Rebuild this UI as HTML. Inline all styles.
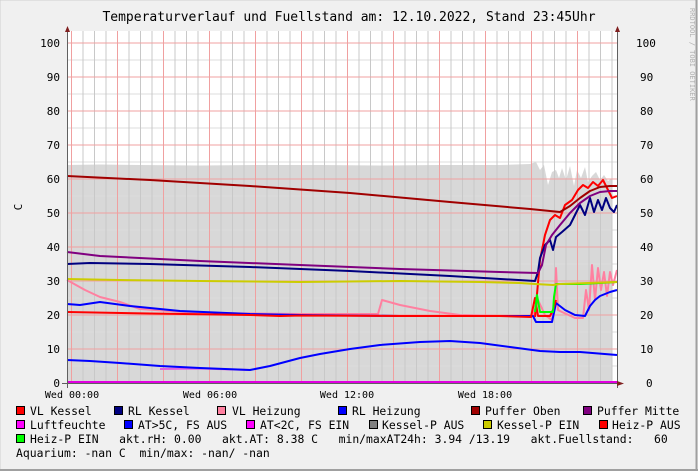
<!DOCTYPE html>
<html><head><meta charset="utf-8"><style>
html,body{margin:0;padding:0;background:#f0f0f0;}
svg{display:block;}
text{font-family:"DejaVu Sans Mono","Liberation Mono",monospace;fill:#000;}
</style></head><body>
<svg width="698" height="471" viewBox="0 0 698 471" xmlns="http://www.w3.org/2000/svg">
<rect x="0" y="0" width="698" height="471" fill="#f0f0f0"/>
<rect x="0" y="0" width="697" height="470" fill="none" stroke="#cfcfcf" stroke-width="1"/>
<line x1="696.5" y1="0" x2="696.5" y2="471" stroke="#a0a0a0" stroke-width="2"/>
<line x1="0" y1="470" x2="698" y2="470" stroke="#a0a0a0" stroke-width="2"/>
<text x="349" y="21" font-size="13" text-anchor="middle">Temperaturverlauf und Fuellstand am: 12.10.2022, Stand 23:45Uhr</text>
<text x="690" y="8" font-size="7" style="fill:#b0b0b0" transform="rotate(90 690 8)">RRDTOOL / TOBI OETIKER</text>
<rect x="67" y="31" width="550" height="352" fill="#fff"/>
<path d="M67,383 L67,165 L100,164.5 L140,165 L200,165.5 L260,165 L320,165 L380,165.5 L440,165 L500,165 L530,164 L536,162 L540,170 L544,165 L548,185 L552,172 L556,170 L559,178 L562,168 L566,180 L570,166 L574,186 L577,170 L581,178 L585,167 L588,182 L592,176 L596,172 L600,180 L604,175 L608,181 L612,178 L612,383 Z" fill="#d8d8d8"/>
<g stroke="#dcdcdc" stroke-width="1">
<line x1="67" y1="366" x2="617" y2="366"/><line x1="67" y1="332" x2="617" y2="332"/><line x1="67" y1="298" x2="617" y2="298"/><line x1="67" y1="264" x2="617" y2="264"/><line x1="67" y1="230" x2="617" y2="230"/><line x1="67" y1="196" x2="617" y2="196"/><line x1="67" y1="162" x2="617" y2="162"/><line x1="67" y1="128" x2="617" y2="128"/><line x1="67" y1="94" x2="617" y2="94"/><line x1="67" y1="60" x2="617" y2="60"/>
</g>
<g stroke="#c8c8c8" stroke-width="1" id="vm"></g>
<g id="grid"></g>
<g fill="none" stroke-width="2" stroke-linejoin="round">
<path stroke="#e060e0" d="M160,369 L200,368.5 L250,370"/>
<path stroke="#ff80a0" d="M67,280 L85,290 L100,297 L120,302 L140,309 L200,313 L300,314 L378,314 L382,300 L400,305 L430,311 L460,315 L500,316 L533,316 L538,300 L545,315 L552,320 L555,300 L556,268 L558,310 L562,312 L575,318 L583,318 L586,290 L589,310 L592,265 L595,300 L598,268 L601,290 L604,272 L607,296 L610,272 L613,285 L617,270"/>
<path stroke="#0000ff" d="M67,304 L80,305 L100,302 L130,306 L180,311 L250,314 L300,315 L400,316 L500,316 L533,316 L536,322 L552,322 L556,303 L565,310 L575,315 L585,316 L590,306 L595,300 L600,296 L605,294 L610,292 L617,290"/>
<path stroke="#ff0000" d="M67,312 L150,313.5 L250,315 L280,316 L300,315.5 L400,316 L500,316 L531,317 L535,298 L538,316 L550,316 L553,310 L556,300"/>
<path stroke="#ff0000" d="M535,317 L540,260 L545,235 L550,220 L555,215 L560,218 L565,205 L572,200 L578,190 L583,185 L588,188 L593,182 L598,186 L603,180 L607,188 L612,198 L617,196"/>
<path stroke="#00ff00" d="M535,312 L537,295 L540,312 L553,312 L554,297 L556,284 L580,284 L600,283 L617,282"/>
<path stroke="#cccc00" d="M67,279 L120,280 L200,281 L300,282 L400,281 L480,282 L520,283 L535,284 L553,285 L560,284 L617,282"/>
<path stroke="#000080" d="M67,264 L90,263 L150,264 L250,267 L350,271 L450,276 L535,281 L538,272 L540,258 L545,245 L550,240 L553,250 L556,237 L562,232 L570,225 L575,215 L580,205 L585,215 L590,198 L594,212 L598,200 L602,210 L606,198 L610,208 L614,212 L617,205"/>
<path stroke="#800080" d="M67,252 L100,256 L200,261 L300,265 L400,269 L500,272 L538,273 L542,265 L546,245 L552,235 L560,225 L570,213 L580,203 L590,196 L600,192 L610,191 L617,191"/>
<path stroke="#a00000" d="M67,176 L150,180 L250,186 L350,193 L450,202 L530,209 L560,212 L570,206 L580,198 L590,191 L600,187 L610,186 L617,186"/>
<path stroke="#0000ff" d="M67,360 L90,361 L120,363 L160,366 L200,368 L250,370 L270,366 L300,358 L320,354 L350,349 L380,345 L420,342 L450,341 L480,343 L510,347 L540,351 L560,352 L580,352 L617,355"/>
<path stroke="#e000e0" d="M67,382 L617,382"/>
</g>
<line x1="67.5" y1="27" x2="67.5" y2="388" stroke="#606060"/>
<line x1="617.5" y1="27" x2="617.5" y2="388" stroke="#606060"/>
<line x1="62" y1="383.5" x2="622" y2="383.5" stroke="#606060"/>
<path d="M65,32 L67.5,26 L70,32 Z M615,32 L617.5,26 L620,32 Z M617,381 L624,383.5 L617,386 Z" fill="#802020"/>
<g font-size="11">
<text x="60" y="47" text-anchor="end">100</text><text x="60" y="81" text-anchor="end">90</text><text x="60" y="115" text-anchor="end">80</text><text x="60" y="149" text-anchor="end">70</text><text x="60" y="183" text-anchor="end">60</text><text x="60" y="217" text-anchor="end">50</text><text x="60" y="251" text-anchor="end">40</text><text x="60" y="285" text-anchor="end">30</text><text x="60" y="319" text-anchor="end">20</text><text x="60" y="353" text-anchor="end">10</text><text x="60" y="387" text-anchor="end">0</text>
<text x="636" y="47">100</text><text x="640" y="81">90</text><text x="640" y="115">80</text><text x="640" y="149">70</text><text x="640" y="183">60</text><text x="640" y="217">50</text><text x="640" y="251">40</text><text x="640" y="285">30</text><text x="640" y="319">20</text><text x="640" y="353">10</text><text x="646" y="387">0</text>
<text x="18" y="211" transform="rotate(-90 18 207)" text-anchor="middle">C</text>
</g>
<g font-size="10">
<text x="72" y="398" text-anchor="middle">Wed 00:00</text><text x="210" y="398" text-anchor="middle">Wed 06:00</text><text x="347" y="398" text-anchor="middle">Wed 12:00</text><text x="485" y="398" text-anchor="middle">Wed 18:00</text>
</g>
<g stroke="#000" stroke-width="1">
<rect x="16.5" y="406.5" width="8" height="8" fill="#ff0000"/><rect x="114.5" y="406.5" width="8" height="8" fill="#000080"/><rect x="217.5" y="406.5" width="8" height="8" fill="#ff80a0"/><rect x="338.5" y="406.5" width="8" height="8" fill="#0000ff"/><rect x="471.5" y="406.5" width="8" height="8" fill="#a00000"/><rect x="583.5" y="406.5" width="8" height="8" fill="#800080"/>
<rect x="16.5" y="420.5" width="8" height="8" fill="#ff00ff"/><rect x="124.5" y="420.5" width="8" height="8" fill="#0000ff"/><rect x="246.5" y="420.5" width="8" height="8" fill="#ff00ff"/><rect x="369.5" y="420.5" width="8" height="8" fill="#808080"/><rect x="483.5" y="420.5" width="8" height="8" fill="#cccc00"/><rect x="599.5" y="420.5" width="8" height="8" fill="#ff0000"/>
<rect x="16.5" y="434.5" width="8" height="8" fill="#00ff00"/>
</g>
<g font-size="11.4" style="white-space:pre">
<text x="30" y="415">VL Kessel</text><text x="128" y="415">RL Kessel</text><text x="232" y="415">VL Heizung</text><text x="352" y="415">RL Heizung</text><text x="485" y="415">Puffer Oben</text><text x="597" y="415">Puffer Mitte</text>
<text x="30" y="429">Luftfeuchte</text><text x="138" y="429">AT&gt;5C, FS AUS</text><text x="260" y="429">AT&lt;2C, FS EIN</text><text x="382" y="429">Kessel-P AUS</text><text x="497" y="429">Kessel-P EIN</text><text x="612" y="429">Heiz-P AUS</text>
<text x="30" y="443" xml:space="preserve">Heiz-P EIN   akt.rH: 0.00   akt.AT: 8.38 C   min/maxAT24h: 3.94 /13.19   akt.Fuellstand:   60</text>
<text x="16" y="457" xml:space="preserve">Aquarium: -nan C  min/max: -nan/ -nan</text>
</g>
<script>
(function(){var ns="http://www.w3.org/2000/svg",g=document.getElementById("vm"),r=document.getElementById("grid");
for(var x=71.5;x<617;x+=11.5){if(Math.round((x-71.5)/11.5)%4==0)continue;var l=document.createElementNS(ns,"line");l.setAttribute("x1",x);l.setAttribute("x2",x);l.setAttribute("y1",31);l.setAttribute("y2",383);g.appendChild(l);}
for(var x=71.5;x<617;x+=46){var l=document.createElementNS(ns,"line");l.setAttribute("x1",x);l.setAttribute("x2",x);l.setAttribute("y1",31);l.setAttribute("y2",383);l.setAttribute("stroke","#f0a0a0");r.appendChild(l);}
for(var y=43;y<383;y+=34){var l=document.createElementNS(ns,"line");l.setAttribute("x1",67);l.setAttribute("x2",617);l.setAttribute("y1",y);l.setAttribute("y2",y);l.setAttribute("stroke","#f0a0a0");r.appendChild(l);}
})();
</script>
</svg>
</body></html>
